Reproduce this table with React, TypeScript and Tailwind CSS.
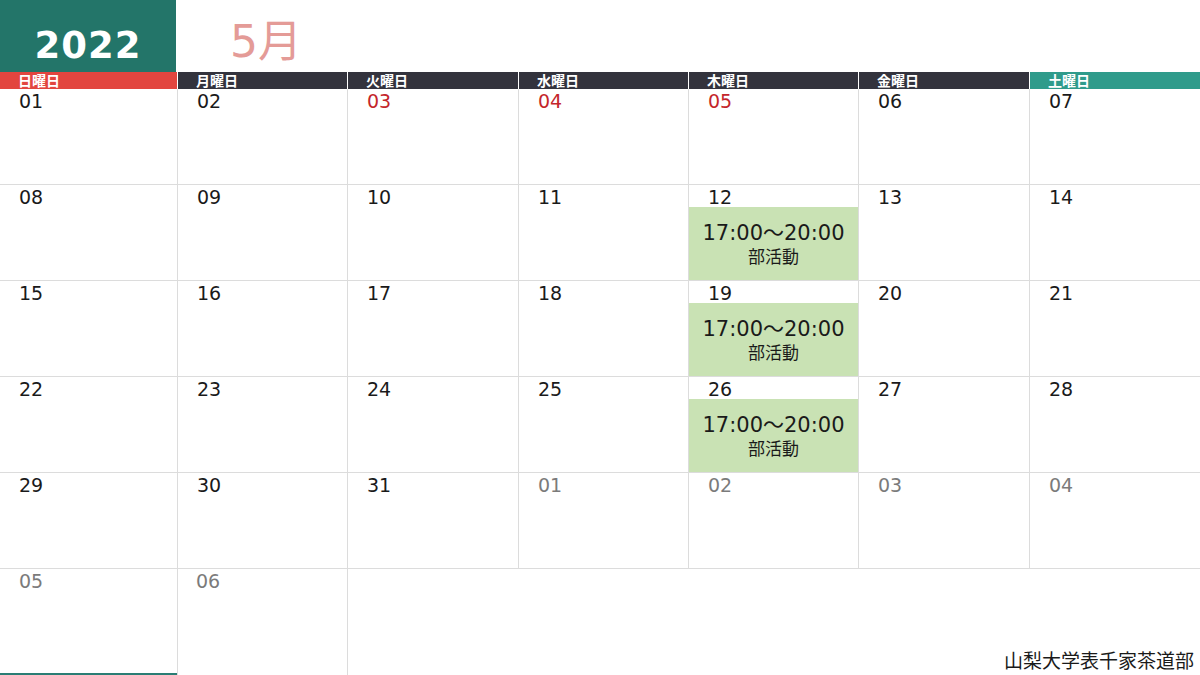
const days = [
	{ label: '日曜日', bg: 'bg-[#e2453f]' },
	{ label: '月曜日', bg: 'bg-[#33333d]' },
	{ label: '火曜日', bg: 'bg-[#33333d]' },
	{ label: '水曜日', bg: 'bg-[#33333d]' },
	{ label: '木曜日', bg: 'bg-[#33333d]' },
	{ label: '金曜日', bg: 'bg-[#33333d]' },
	{ label: '土曜日', bg: 'bg-[#2f9b8b]' },
]

type Cell = { d: string; tone?: 'red' | 'grey'; event?: boolean }

const weeks: Cell[][] = [
	[{ d: '01' }, { d: '02' }, { d: '03', tone: 'red' }, { d: '04', tone: 'red' }, { d: '05', tone: 'red' }, { d: '06' }, { d: '07' }],
	[{ d: '08' }, { d: '09' }, { d: '10' }, { d: '11' }, { d: '12', event: true }, { d: '13' }, { d: '14' }],
	[{ d: '15' }, { d: '16' }, { d: '17' }, { d: '18' }, { d: '19', event: true }, { d: '20' }, { d: '21' }],
	[{ d: '22' }, { d: '23' }, { d: '24' }, { d: '25' }, { d: '26', event: true }, { d: '27' }, { d: '28' }],
	[{ d: '29' }, { d: '30' }, { d: '31' }, { d: '01', tone: 'grey' }, { d: '02', tone: 'grey' }, { d: '03', tone: 'grey' }, { d: '04', tone: 'grey' }],
]

const cols = 'grid grid-cols-[177px_170px_171px_170px_170px_171px_171px]'

function DayCell({ cell, col }: { cell: Cell; col: number }) {
	const color =
		cell.tone === 'red' ? 'text-[#c4262b]' : cell.tone === 'grey' ? 'text-[#7b7b7b]' : 'text-[#1a1a1a]'
	return (
		<div className={`flex flex-col h-[96px] border-b border-[#dcdcdc] ${col > 0 ? 'border-l' : ''}`}>
			<div className={`h-[22px] pl-[19px] pt-[3px] text-[19px] leading-[19px] ${color}`}>{cell.d}</div>
			{cell.event && (
				<div className="flex-1 bg-[#c9e2b4] flex flex-col items-center pt-[14px] text-[#1a1a1a]">
					<div className="text-[21px] leading-[25px]">17:00～20:00</div>
					<div
						className="text-[17px] leading-[19px]"
						style={{ fontFamily: '"Noto Sans CJK JP", sans-serif' }}
					>
						部活動
					</div>
				</div>
			)}
		</div>
	)
}

export default function App() {
	return (
		<div
			className="w-[1200px] h-[675px] bg-white overflow-hidden flex flex-col"
			style={{ fontFamily: '"DejaVu Sans", "Noto Sans CJK JP", sans-serif' }}
		>
			<div className="flex h-[72px]">
				<div className="w-[176px] bg-[#237569] flex items-end justify-center pb-[6px]">
					<span className="text-white font-bold text-[37px] leading-[40px] tracking-[1px]">2022</span>
				</div>
				<div className="pl-[54px] pt-[17px] text-[44px] leading-[50px] text-[#e49b97]">5月</div>
			</div>
			<div className={`${cols} h-[17px]`}>
				{days.map((d, i) => (
					<div key={d.label} className={`${i > 0 ? 'border-l border-white' : ''}`}>
						<div
							className={`${d.bg} h-[17px] text-white font-bold text-[14px] leading-[17px] pl-[18px]`}
							style={{ fontFamily: '"Noto Sans CJK JP", sans-serif' }}
						>
							{d.label}
						</div>
					</div>
				))}
			</div>
			{weeks.map((w, r) => (
				<div key={r} className={cols}>
					{w.map((c, i) => (
						<DayCell key={i} cell={c} col={i} />
					))}
				</div>
			))}
			<div className="flex flex-1">
				<div className="w-[177px] border-b-2 border-[#2a7d74] pl-[19px] pt-[3px] text-[19px] leading-[19px] text-[#7b7b7b]">
					05
				</div>
				<div className="w-[170px] border-l border-[#dcdcdc] pl-[18px] pt-[3px] text-[19px] leading-[19px] text-[#7b7b7b]">
					06
				</div>
				<div className="flex-1 border-l border-[#dcdcdc] flex items-end justify-end pr-[6px] pb-[5px]">
					<span
						className="text-[19px] leading-[20px] text-[#1a1a1a]"
						style={{ fontFamily: '"Noto Sans CJK JP", sans-serif' }}
					>
						山梨大学表千家茶道部
					</span>
				</div>
			</div>
		</div>
	)
}
